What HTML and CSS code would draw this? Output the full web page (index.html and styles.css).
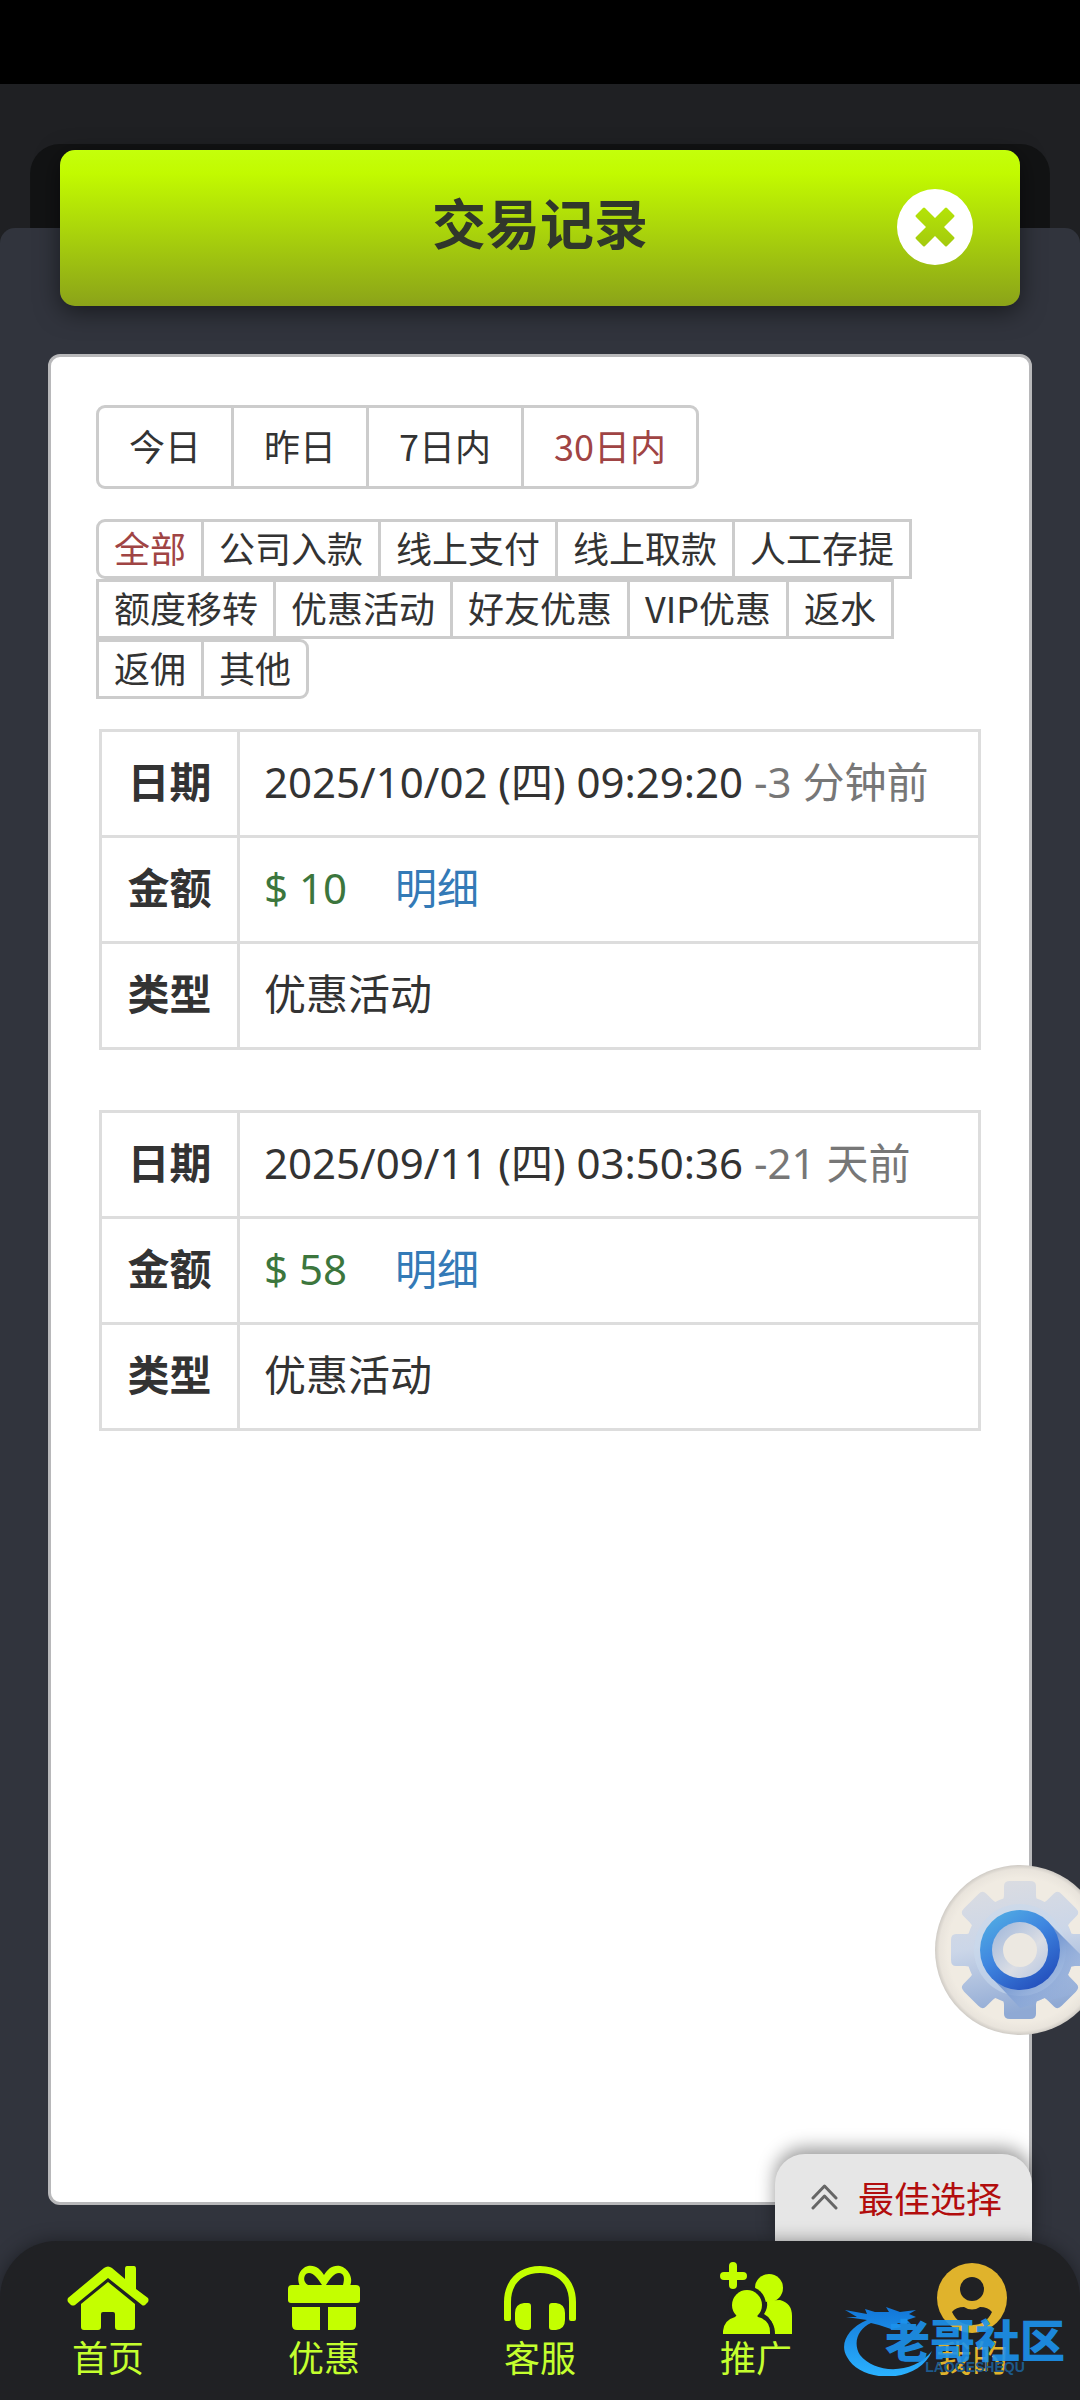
FILE: index.html
```html
<!DOCTYPE html>
<html lang="zh-CN">
<head>
    <meta charset="UTF-8">
    <meta name="viewport" content="width=device-width, initial-scale=1.0">
    <title>交易记录</title>
    <link rel="stylesheet" href="styles.css">
</head>
<body>
    <div class="status-bar"></div>
    <div class="backdrop">
        <div class="backdrop-pane"></div>
    </div>

    <div class="sheet">
        <header class="title-bar">
            <h1>交易记录</h1>
            <button type="button" class="close-btn" aria-label="关闭">
                <svg viewBox="0 0 76 76" width="76" height="76">
                    <path fill="#fff" fill-rule="evenodd" d="M38 0a38 38 0 1 1 0 76a38 38 0 1 1 0-76zM26 19L19 26Q18 27 19 28L29 38L19 48Q18 49 19 50L26 57Q27 58 28 57L38 47L48 57Q49 58 50 57L57 50Q58 49 57 48L47 38L57 28Q58 27 57 26L50 19Q49 18 48 19L38 29L28 19Q27 18 26 19z"/>
                </svg>
            </button>
        </header>

        <main class="card">
            <div class="btn-group">
                <button type="button" class="btn btn-lg">今日</button>
                <button type="button" class="btn btn-lg">昨日</button>
                <button type="button" class="btn btn-lg">7日内</button>
                <button type="button" class="btn btn-lg active">30日内</button>
            </div>

            <div class="btn-group">
                <button type="button" class="btn active">全部</button>
                <button type="button" class="btn">公司入款</button>
                <button type="button" class="btn">线上支付</button>
                <button type="button" class="btn">线上取款</button>
                <button type="button" class="btn">人工存提</button>
                <button type="button" class="btn">额度移转</button>
                <button type="button" class="btn">优惠活动</button>
                <button type="button" class="btn">好友优惠</button>
                <button type="button" class="btn">VIP优惠</button>
                <button type="button" class="btn">返水</button>
                <button type="button" class="btn">返佣</button>
                <button type="button" class="btn">其他</button>
            </div>

            <table class="record">
                <tr>
                    <th scope="row">日期</th>
                    <td>2025/10/02 (四) 09:29:20 <span class="ago">-3 分钟前</span></td>
                </tr>
                <tr>
                    <th scope="row">金额</th>
                    <td><span class="amount">$ 10</span><a href="#" class="detail">明细</a></td>
                </tr>
                <tr>
                    <th scope="row">类型</th>
                    <td>优惠活动</td>
                </tr>
            </table>

            <table class="record">
                <tr>
                    <th scope="row">日期</th>
                    <td>2025/09/11 (四) 03:50:36 <span class="ago">-21 天前</span></td>
                </tr>
                <tr>
                    <th scope="row">金额</th>
                    <td><span class="amount">$ 58</span><a href="#" class="detail">明细</a></td>
                </tr>
                <tr>
                    <th scope="row">类型</th>
                    <td>优惠活动</td>
                </tr>
            </table>
        </main>

        <div class="bottom">
            <button type="button" class="best">
                <svg viewBox="0 0 27 26" width="27" height="26" fill="none" stroke="#666" stroke-width="3" stroke-linecap="round" stroke-linejoin="round">
                    <path d="M2 14L13.500 2L25 14M2 24L13.500 12L25 24"/>
                </svg>
                最佳选择
            </button>

            <nav class="tabs">
                <a href="#">
                    <svg viewBox="0 0 82 72" width="82" height="72" fill="#c4ff00">
                        <path d="M1 36Q0 38 1 40L4 43Q6 44 8 43L41 16L75 43Q76 44 78 43L81 40Q82 38 81 36L69 27V7Q69 4 67 4H60Q58 4 58 7V17L45 6Q41 3 37 6z"/>
                        <path d="M41 20L14 42V65Q14 68 17 68H31Q34 68 34 65V52Q34 50 36 50H46Q48 50 48 52V65Q48 68 51 68H65Q68 68 68 65V42z"/>
                    </svg>
                    <span>首页</span>
                </a>
                <a href="#">
                    <svg viewBox="0 0 72 72" width="72" height="72" fill="#c4ff00">
                        <path d="M13 26C7 16 12 6 20 4C28 3 32 7 36 13C40 7 44 3 52 4C60 6 66 16 62 24L55 23C57 16 56 11 51 11C46 11 42 17 38 23H34C30 17 26 11 21 11C17 11 15 16 17 20Q18 22 20 23L15 26z"/>
                        <path d="M4 23H68Q72 23 72 27V38Q72 41 69 41H3Q0 41 0 38V27Q0 23 4 23z"/>
                        <path d="M4 45H32V68H9Q4 68 4 63zM40 45H68V63Q68 68 63 68H40z"/>
                    </svg>
                    <span>优惠</span>
                </a>
                <a href="#">
                    <svg viewBox="0 0 72 72" width="72" height="72" fill="#c4ff00">
                        <path d="M0 40C0 18 15 4 36 4C57 4 72 18 72 40V57Q72 59 70 59H67Q65 59 65 57V40C65 22 54 11 36 11C18 11 7 22 7 40V57Q7 59 5 59H2Q0 59 0 57z"/>
                        <path d="M20 41H24Q27 41 27 44V65Q27 68 24 68H20Q11 67 11 58V51Q11 42 20 41zM52 41H48Q45 41 45 44V65Q45 68 48 68H52Q61 67 61 58V51Q61 42 52 41z"/>
                    </svg>
                    <span>客服</span>
                </a>
                <a href="#">
                    <svg viewBox="0 0 72 72" width="72" height="72" fill="#c4ff00">
                        <path d="M13 4V23M4 14H23" stroke="#c4ff00" stroke-width="8" stroke-linecap="round"/>
                        <circle cx="49" cy="26" r="14"/>
                        <path d="M47 40Q48 38 60 38Q72 41 72 54V72H54Q54 57 44 52Q48 46 47 40z"/>
                        <circle cx="27" cy="43" r="19" fill="#202124"/>
                        <path d="M27 50Q55 51 55 72H0z" fill="#202124"/>
                        <circle cx="27" cy="43" r="15"/>
                        <path d="M3 72V69Q4 58 15 55L19 51H35L38 55Q50 58 50 70V72z"/>
                    </svg>
                    <span>推广</span>
                </a>
                <a href="#" class="current">
                    <svg viewBox="0 0 72 72" width="72" height="72">
                        <circle cx="36" cy="36" r="35" fill="#e0b32c"/>
                        <circle cx="36" cy="27" r="12" fill="#202124"/>
                        <path d="M16 50Q20 45 28 45Q36 50 44 45Q52 45 56 50Q50 63 36 63Q22 63 16 50z" fill="#202124"/>
                    </svg>
                    <span>我的</span>
                </a>
            </nav>

            <div class="watermark">
                <svg viewBox="0 0 90 70" width="90" height="70">
                    <defs>
                        <linearGradient id="wave" x1="0" y1="0" x2="0" y2="1">
                            <stop offset="0" stop-color="#1276d8"/>
                            <stop offset="1" stop-color="#2bb2ff"/>
                        </linearGradient>
                    </defs>
                    <path fill="url(#wave)" d="M24 14C5 22-4 38 4 51C18 78 76 78 89 45C70 69 32 68 17 49C9 36 16 22 28 17L36 19L48 23L58 21L54 17L68 18L64 14L73 11L66 8L73 4L57 6L43 1L46 6L32 6L22 3L24 8L2 4L14 11L3 11z"/>
                </svg>
                <div class="watermark-text">
                    <strong>老哥社区</strong>
                    <small>LAOGESHEQU</small>
                </div>
            </div>
        </div>
    </div>

    <div class="float-layer">
        <button type="button" class="float-btn" aria-label="设置">
            <svg viewBox="-85 -85 170 170" width="170" height="170">
                <defs>
                    <radialGradient id="disc">
                        <stop offset="0.850" stop-color="#f0ebe2"/>
                        <stop offset="0.950" stop-color="#e9e4dc"/>
                        <stop offset="1" stop-color="#cfcbc5"/>
                    </radialGradient>
                    <linearGradient id="gear" x1="0" y1="0" x2="0.200" y2="1">
                        <stop offset="0" stop-color="#dddde0"/>
                        <stop offset="0.500" stop-color="#cbd6e8"/>
                        <stop offset="1" stop-color="#8fa9d4"/>
                    </linearGradient>
                    <linearGradient id="ring" x1="0" y1="0" x2="0.700" y2="1">
                        <stop offset="0" stop-color="#55b5e4"/>
                        <stop offset="0.500" stop-color="#3f86e0"/>
                        <stop offset="1" stop-color="#2450bd"/>
                    </linearGradient>
                    <linearGradient id="hub" x1="0" y1="0" x2="1" y2="1">
                        <stop offset="0" stop-color="#9db5da"/>
                        <stop offset="0.600" stop-color="#dadde4"/>
                        <stop offset="1" stop-color="#b4c5e2"/>
                    </linearGradient>
                    <linearGradient id="shade" x1="0" y1="0" x2="1" y2="1">
                        <stop offset="0.400" stop-color="#7396d0"/>
                        <stop offset="1" stop-color="#a9c0e6" stop-opacity="0"/>
                    </linearGradient>
                    <path id="teeth" d="M-20 -46Q-16 -50 -16 -55V-64Q-16 -69 -10 -69H10Q16 -69 16 -64V-55Q16 -50 20 -46zM-20 46Q-16 50 -16 55V64Q-16 69 -10 69H10Q16 69 16 64V55Q16 50 20 46z"/>
                    <clipPath id="cog">
                        <circle r="54"/>
                        <use href="#teeth"/>
                        <use href="#teeth" transform="rotate(45)"/>
                        <use href="#teeth" transform="rotate(90)"/>
                        <use href="#teeth" transform="rotate(135)"/>
                    </clipPath>
                </defs>
                <circle r="85" fill="url(#disc)"/>
                <g clip-path="url(#cog)">
                    <rect x="-70" y="-70" width="140" height="140" fill="url(#gear)"/>
                    <circle r="46" fill="#c8d9ec" opacity="0.600"/>
                    <path fill="url(#shade)" d="M28 -28L70 14V40L0 58L-28 28z"/>
                </g>
                <circle r="40" fill="url(#ring)"/>
                <circle r="28" fill="url(#hub)"/>
                <circle r="17" fill="#ece8e1"/>
            </svg>
        </button>
    </div>
</body>
</html>
```
FILE: styles.css
```css
* {
    box-sizing: border-box;
}
body {
    display: flex;
    flex-direction: column;
    position: relative;
    min-height: 100vh;
    margin: 0;
    background-color: #1f2023;
    color: #333;
    font-family: "Noto Sans CJK SC", sans-serif;
    font-size: 36px;
}
button {
    font: inherit;
    cursor: pointer;
}
a {
    text-decoration: none;
}
svg {
    display: block;
    flex: none;
}
.status-bar {
    height: 84px;
    background: #000;
}
.backdrop {
    padding: 60px 30px 0;
}
.backdrop-pane {
    height: 84px;
    background: #121314;
    border-radius: 30px 30px 0 0;
}
.sheet {
    flex: 1;
    display: flex;
    flex-direction: column;
    background: #31343d;
    border-radius: 15px 15px 0 0;
}

/* title */
.title-bar {
    position: relative;
    display: flex;
    align-items: center;
    justify-content: center;
    height: 156px;
    margin: -78px 60px 48px;
    background: linear-gradient(#c4ff0b, #c2fa00 15%, #8ba319);
    border-radius: 15px;
    box-shadow: 0 6px 24px rgba(0, 0, 0, 0.5);
}
.title-bar h1 {
    margin: 0 0 12px;
    font-size: 54px;
    line-height: 72px;
    color: #30372b;
}
.close-btn {
    position: absolute;
    top: 39px;
    right: 47px;
    padding: 0;
    border: none;
    background: none;
}

/* content */
.card {
    flex: 1;
    margin: 0 48px 36px;
    padding: 48px 45px;
    background: #fff;
    border: 3px solid #b8b8ba;
    border-radius: 12px;
}
.btn-group {
    display: flex;
    flex-wrap: wrap;
    margin-bottom: 30px;
}
.btn {
    margin-right: -3px;
    padding: 0 15px 3px;
    background: #fff;
    border: 3px solid #ccc;
    color: #333;
    line-height: 51px;
}
.btn-lg {
    padding: 0 30px 3px;
    line-height: 75px;
}
.btn:first-child {
    border-radius: 9px 0 0 9px;
}
.btn:last-child {
    border-radius: 0 9px 9px 0;
}
.btn.active {
    color: #a04444;
}
.record {
    width: calc(100% - 6px);
    margin: 0 3px 60px;
    border-collapse: collapse;
    font-family: "Noto Sans", "Noto Sans CJK SC", sans-serif;
    font-size: 42px;
    line-height: 55px;
    white-space: nowrap;
}
.record th,
.record td {
    padding: 22px 24px 26px;
    border: 3px solid #ddd;
    text-align: left;
}
.record th {
    width: 138px;
    text-align: center;
}
.ago {
    color: #777;
}
.amount {
    margin-right: 48px;
    color: #3c763d;
}
.detail {
    color: #337ab7;
}

/* bottom bar */
.bottom {
    position: relative;
}
.best {
    position: absolute;
    right: 48px;
    bottom: 100%;
    display: flex;
    align-items: center;
    gap: 20px;
    height: 87px;
    padding: 0 30px 2px 36px;
    background: #e6e6e6;
    border: none;
    border-radius: 30px 30px 0 0;
    box-shadow: 0 -6px 18px rgba(0, 0, 0, 0.4);
    color: #b20d0d;
}
.tabs {
    position: relative;
    display: flex;
    height: 159px;
    padding-top: 21px;
    background: #202124;
    border-radius: 57px 57px 0 0;
    box-shadow: 0 0 18px rgba(0, 0, 0, 0.4);
}
.tabs a {
    flex: 1;
    display: flex;
    flex-direction: column;
    align-items: center;
    color: #c4ff2e;
    line-height: 45px;
}
.tabs .current {
    color: #e0b32c;
}
.watermark {
    position: absolute;
    right: 15px;
    bottom: 24px;
    display: flex;
    pointer-events: none;
}
.watermark-text {
    display: flex;
    flex-direction: column;
    align-items: center;
    margin-left: -48px;
    padding-top: 15px;
    color: #1c93ee;
}
.watermark strong {
    font-size: 45px;
    font-weight: 900;
    line-height: 36px;
    opacity: 0.9;
}
.watermark small {
    padding-top: 3px;
    color: #1d5a8c;
    font-family: "Liberation Sans", sans-serif;
    font-size: 14px;
    font-weight: bold;
    line-height: 14px;
}

/* floating settings button, runs off the right edge */
.float-layer {
    position: absolute;
    top: 0;
    right: 0;
    bottom: 0;
    width: 145px;
    overflow: hidden;
    pointer-events: none;
}
.float-btn {
    position: absolute;
    bottom: 365px;
    left: 0;
    padding: 0;
    background: none;
    border: none;
    pointer-events: auto;
}
```
